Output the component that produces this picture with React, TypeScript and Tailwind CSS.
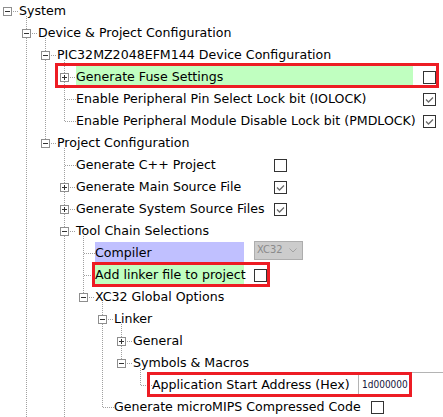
import clsx from 'clsx'

type Row = {
  d: number
  label: string
  h?: 'plus' | 'minus'
  last?: boolean
  lines?: number[]
  w?: string
  bg?: string
  control?: 'on' | 'off' | 'select' | 'address'
  mark?: string
}

const rows: Row[] = [
  { d: 0, label: 'System', h: 'minus' },
  { d: 1, label: 'Device & Project Configuration', h: 'minus' },
  { d: 2, label: 'PIC32MZ2048EFM144 Device Configuration', h: 'minus', lines: [1] },
  {
    d: 3,
    label: 'Generate Fuse Settings',
    h: 'plus',
    lines: [1, 2],
    w: 'w-[337px]',
    bg: 'bg-[#c0ffc0]',
    control: 'off',
    mark: 'left-[55px] right-[4px] -top-[3px] bottom-0',
  },
  { d: 3, label: 'Enable Peripheral Pin Select Lock bit (IOLOCK)', lines: [1, 2], w: 'w-[337px]', control: 'on' },
  {
    d: 3,
    label: 'Enable Peripheral Module Disable Lock bit (PMDLOCK)',
    last: true,
    lines: [1, 2],
    w: 'w-[337px]',
    control: 'on',
  },
  { d: 2, label: 'Project Configuration', h: 'minus', last: true, lines: [1] },
  { d: 3, label: 'Generate C++ Project', lines: [1], w: 'w-[188px]', control: 'off' },
  { d: 3, label: 'Generate Main Source File', h: 'plus', lines: [1], w: 'w-[188px]', control: 'on' },
  { d: 3, label: 'Generate System Source Files', h: 'plus', lines: [1], w: 'w-[188px]', control: 'on' },
  { d: 3, label: 'Tool Chain Selections', h: 'minus', lines: [1] },
  { d: 4, label: 'Compiler', lines: [1, 3], w: 'w-[149px]', bg: 'bg-[#c0c0ff]', control: 'select' },
  {
    d: 4,
    label: 'Add linker file to project',
    lines: [1, 3],
    w: 'w-[149px]',
    bg: 'bg-[#c0ffc0]',
    control: 'off',
    mark: 'left-[92px] w-[178px] -top-[2px] -bottom-px',
  },
  { d: 4, label: 'XC32 Global Options', h: 'minus', last: true, lines: [1, 3] },
  { d: 5, label: 'Linker', h: 'minus', lines: [1, 3] },
  { d: 6, label: 'General', h: 'plus', lines: [1, 3, 5] },
  { d: 6, label: 'Symbols & Macros', h: 'minus', last: true, lines: [1, 3, 5] },
  {
    d: 7,
    label: 'Application Start Address (Hex)',
    last: true,
    lines: [1, 3, 5],
    w: 'w-[206px]',
    control: 'address',
    mark: 'left-[147px] w-[265px] -top-[2px] -bottom-px',
  },
  { d: 5, label: 'Generate microMIPS Compressed Code', last: true, lines: [1, 3], w: 'w-[247px]', control: 'off' },
]

const DOT = '#a0a0a0'

const Guide = ({ on }: { on: boolean }) => (
  <svg width={19} height={22} className="shrink-0">
    {on && <line x1={7.5} x2={7.5} y1={0} y2={22} stroke={DOT} strokeDasharray="1 1" />}
  </svg>
)

const Handle = ({ h, last, root }: { h?: 'plus' | 'minus'; last?: boolean; root: boolean }) => (
  <svg width={19} height={22} className="shrink-0">
    {!root && <line x1={7.5} x2={7.5} y1={0} y2={last ? 12 : 22} stroke={DOT} strokeDasharray="1 1" />}
    <line x1={h ? 13 : 8} x2={19} y1={11.5} y2={11.5} stroke={DOT} strokeDasharray="1 1" />
    {h && (
      <>
        <rect x={3.5} y={7.5} width={8} height={8} fill="#fff" stroke="#8e8e8e" />
        <path d="M5 11.5h5" stroke="#333" />
        {h === 'plus' && <path d="M7.5 9v5" stroke="#333" />}
      </>
    )}
  </svg>
)

const Check = ({ on }: { on: boolean }) => (
  <span className="flex h-[13px] w-[13px] shrink-0 items-center justify-center border border-[#333] bg-white">
    {on && (
      <svg width={11} height={11}>
        <path d="M2 5.5l2.5 2.5 4.5-4.5" fill="none" stroke="#6b6b6b" strokeWidth={1.3} />
      </svg>
    )}
  </span>
)

const Control = ({ kind }: { kind: Row['control'] }) => {
  if (kind === 'on' || kind === 'off') {
    return (
      <span className="ml-[10px]">
        <Check on={kind === 'on'} />
      </span>
    )
  }
  if (kind === 'select') {
    return (
      <div className="ml-[10px] -mt-px flex h-[19px] w-[49px] items-center self-start border border-[#adadad] bg-[#cccccc] pl-[2px] font-['DejaVu_Sans_Condensed','DejaVu_Sans',sans-serif] text-[11px] text-[#8a8a8a]">
        XC32
        <svg width={8} height={5} className="mr-[5px] ml-auto">
          <path d="M0.5 0.5l3.5 3.5 3.5-3.5" fill="none" stroke="#a3a3a3" />
        </svg>
      </div>
    )
  }
  return (
    <div className="-mt-[2px] h-[24px] flex-1 self-start border-t border-l border-[#b4b4b4] pl-[3px] font-['DejaVu_Sans_Condensed','DejaVu_Sans',sans-serif] text-[10px] leading-[24px] text-[#14143c]">
      1d000000
    </div>
  )
}

const TreeRow = ({ row }: { row: Row }) => {
  const guides = Array.from({ length: row.d }, (_, i) => (row.lines ?? []).includes(i))
  return (
    <div className="relative flex h-[22px] items-center">
      {guides.map((on, i) => (
        <Guide key={i} on={on} />
      ))}
      <Handle h={row.h} last={row.last} root={row.d === 0} />
      <div className={clsx('relative h-full shrink-0 whitespace-nowrap leading-[22px]', row.w, row.bg)}>
        {row.label}
        {row.h === 'minus' && (
          <svg width={1} height={6} className="absolute top-[16px] left-[7px]">
            <line x1={0.5} x2={0.5} y1={0} y2={6} stroke={DOT} strokeDasharray="1 1" />
          </svg>
        )}
      </div>
      {row.control && <Control kind={row.control} />}
      {row.mark && (
        <span className={clsx('pointer-events-none absolute border-[3px] border-[#ed1c24]', row.mark)} />
      )}
    </div>
  )
}

export default function App() {
  return (
    <div className="h-[417px] w-[443px] overflow-hidden bg-white font-['DejaVu_Sans','Liberation_Sans',sans-serif] text-[12.6px] text-black">
      {rows.map((row, i) => (
        <TreeRow key={i} row={row} />
      ))}
    </div>
  )
}
